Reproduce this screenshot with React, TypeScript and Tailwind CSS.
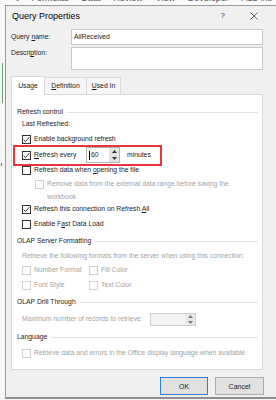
import type { ReactNode } from 'react'

function Check({ checked = false, disabled = false }: { checked?: boolean; disabled?: boolean }) {
  return (
    <span
      className={`flex h-[9px] w-[9px] shrink-0 items-center justify-center border bg-white ${
        disabled ? 'border-[#cfcfcf]' : 'border-[#333333]'
      }`}
    >
      {checked && (
        <svg width="7" height="7" viewBox="0 0 7 7">
          <path d="M0.7 3.6 L2.6 5.5 L6.3 1.1" fill="none" stroke="#222" strokeWidth="0.9" />
        </svg>
      )}
    </span>
  )
}

function Group({ label, h }: { label: string; h: string }) {
  return (
    <div className={`flex items-center pr-[4px] ${h}`}>
      <span>{label}</span>
      <span className="ml-[4px] h-px flex-1 bg-[#e3e3e3]" />
    </div>
  )
}

function CheckRow({
  h,
  checked,
  disabled,
  indent,
  children,
}: {
  h: string
  checked?: boolean
  disabled?: boolean
  indent?: boolean
  children: ReactNode
}) {
  return (
    <div className={`flex items-center gap-[3px] ${indent ? 'pl-[18px]' : 'pl-[5px]'} ${h} ${disabled ? 'text-[#a3a3a3]' : ''}`}>
      <Check checked={checked} disabled={disabled} />
      <span>{children}</span>
    </div>
  )
}

function Spin({ disabled = false }: { disabled?: boolean }) {
  const c = disabled ? '#7a7a7a' : '#333'
  return (
    <div className={`flex w-[10px] flex-col ${disabled ? 'bg-[#e8e8e8]' : 'bg-[#e4e4e4]'}`}>
      <div className="flex flex-1 items-center justify-center">
        <svg width="5" height="3" viewBox="0 0 5 3">
          <path d="M0 3 L2.5 0 L5 3 Z" fill={c} />
        </svg>
      </div>
      <div className="flex flex-1 items-center justify-center">
        <svg width="5" height="3" viewBox="0 0 5 3">
          <path d="M0 0 L5 0 L2.5 3 Z" fill={c} />
        </svg>
      </div>
    </div>
  )
}

const u = 'underline decoration-[0.7px] underline-offset-[1px]'

export default function App() {
  return (
    <div className="h-[400px] w-[276px] overflow-hidden bg-[#f6f6f6] font-['Liberation_Sans',Arial,sans-serif] text-[6.8px] leading-none text-[#1b1b1b]">
      {/* Excel ribbon peeking out behind the dialog */}
      <div className="h-[5px] overflow-hidden bg-[#fafafa]">
        <div className="-mt-[6px] flex justify-between pl-[16px] pr-[4px] text-[9px] text-[#555]">
          <span>t</span>
          <span>Formulas</span>
          <span>Data</span>
          <span>Review</span>
          <span>View</span>
          <span>Developer</span>
          <span>Add-ins</span>
        </div>
      </div>

      <div className="flex">
        {/* left edge of the sheet */}
        <div className="flex w-[5px] flex-col pt-[58px]">
          <div className="ml-[2px] h-[40px] w-px bg-[#6aa86a]" />
          <div className="ml-[1px] mt-[60px] h-[3px] w-px bg-[#777]" />
        </div>

        {/* dialog */}
        <div className="flex h-[394px] w-[271px] flex-col border-b-2 border-l border-t border-b-[#8e8e8e] border-l-[#9a9a9a] border-t-[#9a9a9a] bg-[#f0f0f0]">
          {/* title bar */}
          <div className="flex h-[20px] items-center pl-[6px] text-[9px] text-black">
            <span>Query Properties</span>
            <span className="ml-auto mr-[25px] text-[8px] text-[#333]">?</span>
            <svg width="8" height="8" viewBox="0 0 8 8" className="mr-[18px]">
              <path d="M0.5 0.5 L7.5 7.5 M7.5 0.5 L0.5 7.5" stroke="#333" strokeWidth="0.8" />
            </svg>
          </div>

          {/* query name */}
          <div className="mt-[3px] flex h-[16px] items-center pl-[5px]">
            <span className="w-[60px]">
              Query <span className={u}>n</span>ame:
            </span>
            <div className="flex h-full w-[192px] items-center border border-[#c9c9c9] bg-white pl-[2px]">
              AllReceived
            </div>
          </div>

          {/* description */}
          <div className="mt-[2px] flex h-[23px] pl-[5px]">
            <span className="w-[60px] pt-[3px]">
              Descri<span className={u}>p</span>tion:
            </span>
            <div className="h-full w-[192px] border border-[#c9c9c9] bg-white" />
          </div>

          {/* tabs */}
          <div className="mt-[6px] flex h-[18px] items-end pl-[5px]">
            <div className="relative z-10 -mb-px flex h-[19px] w-[34px] items-center justify-center border border-b-0 border-[#d9d9d9] bg-white">
              Usage
            </div>
            <div className="flex h-[17px] w-[42px] items-center justify-center border border-l-0 border-b-0 border-[#d9d9d9] bg-[#f6f6f6]">
              <span>
                <span className={u}>D</span>efinition
              </span>
            </div>
            <div className="flex h-[17px] w-[34px] items-center justify-center border border-l-0 border-b-0 border-[#d9d9d9] bg-[#f6f6f6]">
              <span>
                <span className={u}>U</span>sed In
              </span>
            </div>
          </div>

          {/* tab panel */}
          <div className="ml-[5px] flex h-[276px] w-[252px] flex-col border border-[#d9d9d9] bg-white pl-[5px] pt-[11px]">
            <Group label="Refresh control" h="h-[12px]" />
            <div className="flex h-[13px] items-center pl-[5px]">Last Refreshed:</div>
            <CheckRow h="h-[16px]" checked>
              Enable background refresh
            </CheckRow>

            <div className="relative flex h-[16px] items-center gap-[3px] pl-[5px]">
              <div className="absolute -left-[4px] -top-[2px] h-[21px] w-[149px] border-2 border-[#e8343c]" />
              <Check checked />
              <span className="w-[49px]">
                <span className={u}>R</span>efresh every
              </span>
              <div className="flex h-[16px] w-[34px] border border-[#b5b5b5] bg-white">
                <div className="flex flex-1 items-center pl-[2px]">
                  <span className="mr-[1px] h-[9px] w-px bg-black" />
                  60
                </div>
                <Spin />
              </div>
              <span className="ml-[4px]">minutes</span>
            </div>

            <CheckRow h="h-[15px]">
              Refresh data when <span className={u}>o</span>pening the file
            </CheckRow>
            <CheckRow h="h-[13px]" disabled indent>
              Remove data from the external data range before saving the
            </CheckRow>
            <div className="flex h-[12px] items-center pl-[30px] text-[#a3a3a3]">workbook</div>
            <CheckRow h="h-[13px]" checked>
              Refresh this connection on Refresh <span className={u}>A</span>ll
            </CheckRow>
            <CheckRow h="h-[17px]">
              Enable F<span className={u}>a</span>st Data Load
            </CheckRow>

            <Group label="OLAP Server Formatting" h="h-[16px]" />
            <div className="flex h-[14px] items-center pl-[5px] text-[#a3a3a3]">
              Retrieve the following formats from the server when using this connection:
            </div>
            <div className="flex h-[14px] items-center pl-[5px] text-[#a3a3a3]">
              <div className="flex w-[67px] items-center gap-[3px]">
                <Check disabled />
                <span>Number Format</span>
              </div>
              <div className="flex items-center gap-[3px]">
                <Check disabled />
                <span>Fill Color</span>
              </div>
            </div>
            <div className="flex h-[17px] items-center pl-[5px] text-[#a3a3a3]">
              <div className="flex w-[67px] items-center gap-[3px]">
                <Check disabled />
                <span>Font Style</span>
              </div>
              <div className="flex items-center gap-[3px]">
                <Check disabled />
                <span>Text Color</span>
              </div>
            </div>

            <Group label="OLAP Drill Through" h="h-[17px]" />
            <div className="flex h-[17px] items-center pl-[5px] text-[#a3a3a3]">
              <span className="w-[128px]">Maximum number of records to retrieve:</span>
              <div className="flex h-[13px] w-[46px] border border-[#cccccc] bg-[#f3f3f3]">
                <div className="flex-1" />
                <Spin disabled />
              </div>
            </div>

            <Group label="Language" h="h-[18px]" />
            <CheckRow h="h-[15px]" disabled>
              Retrieve data and errors in the Office display language when available
            </CheckRow>
          </div>

          {/* buttons */}
          <div className="mt-[7px] flex h-[18px] justify-end gap-[7px] pr-[12px]">
            <div className="flex w-[48px] items-center justify-center border border-[#2f7fd0] bg-[#e1e1e1] text-[7px]">
              OK
            </div>
            <div className="flex w-[49px] items-center justify-center border border-[#adadad] bg-[#e1e1e1] text-[7px]">
              Cancel
            </div>
          </div>
        </div>
      </div>
    </div>
  )
}
